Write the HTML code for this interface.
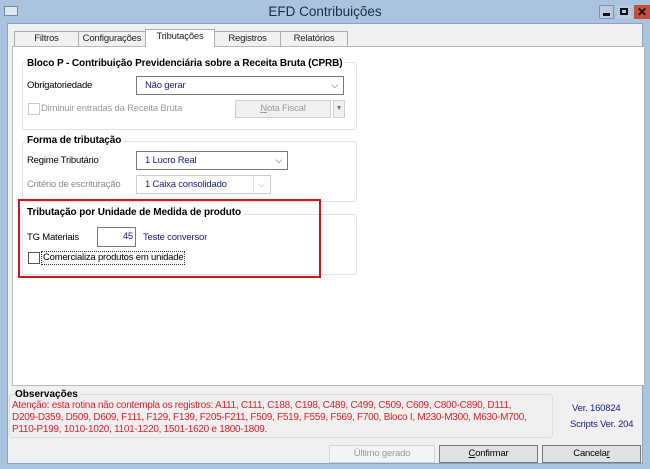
<!DOCTYPE html>
<html><head><meta charset="utf-8"><style>
*{box-sizing:border-box;margin:0;padding:0}
body{width:650px;height:469px;background:#aac3df;font-family:"Liberation Sans",sans-serif;font-size:9.5px;letter-spacing:-0.2px;color:#000;position:relative;overflow:hidden;white-space:nowrap}
.a{position:absolute}
.client{left:7px;top:23px;width:636px;height:441px;background:#f0f0f0;border:1px solid #8aa3c0}
.tab{top:31px;height:16px;background:#f0f0f0;border:1px solid #adadad;border-bottom:none;text-align:center;line-height:14px;font-size:9.5px;color:#222}
.panel{left:12px;top:46px;width:633px;height:340px;background:#fff;border:1px solid #b9b9b9}
.grp{border:1px solid #e2e2e2;border-radius:3px;background:#fff}
.gt{font-weight:bold;font-size:10px;letter-spacing:-0.1px;background:#fff;padding:0 2px}
.combo{background:#fff;border:1px solid #7a7a7a;color:#1a1a8c;padding-left:8px;line-height:17px}
.combo i{position:absolute;right:5px;top:0;font-style:normal;color:#333;font-size:9px}
.cb{width:12px;height:12px;border:1px solid #888;background:#fff}
.btn{border:1px solid #adadad;background:#e1e1e1;text-align:center;line-height:16px}
.red{color:#e0202a;font-size:10px;line-height:12px;letter-spacing:-0.28px}
</style></head><body>
<div class="a" style="left:4px;top:6px;width:14px;height:10px;background:#dfe8ef;border:1px solid #6f8aa3"></div>
<div class="a" style="left:0;top:4px;width:650px;text-align:center;font-size:13.5px;letter-spacing:0;color:#1e2e40">EFD Contribuições</div>
<div class="a" style="left:599px;top:5px;width:15px;height:14px;border:1px solid #7e94ad;background:#b8cbe0"><div class="a" style="left:3px;top:7px;width:7px;height:3px;background:#111"></div></div>
<div class="a" style="left:617px;top:5px;width:14px;height:14px;background:#b8cbe0"><div class="a" style="left:3px;top:3px;width:8px;height:7px;border:2px solid #111"></div></div>
<div class="a" style="left:634px;top:5px;width:16px;height:14px;background:#c7503c;color:#111;font-weight:bold;text-align:center;font-size:12px;line-height:14px">✕</div>
<div class="a client"></div>
<div class="a tab" style="left:14px;width:65px">Filtros</div>
<div class="a tab" style="left:78px;width:68px">Configurações</div>
<div class="a tab" style="left:214px;width:67px">Registros</div>
<div class="a tab" style="left:280px;width:68px">Relatórios</div>
<div class="a panel"></div>
<div class="a tab" style="left:145px;top:29px;height:18px;width:70px;background:#fff;border-color:#adadad;line-height:14px">Tributações</div>

<div class="a grp" style="left:22px;top:62px;width:335px;height:68px"></div>
<div class="a gt" style="left:25px;top:58px">Bloco P - Contribuição Previdenciária sobre a Receita Bruta (CPRB)</div>
<div class="a" style="left:27px;top:80px">Obrigatoriedade</div>
<div class="a combo" style="left:136px;top:76px;width:208px;height:19px">Não gerar<i>⌵</i></div>
<div class="a cb" style="left:28px;top:103px;border-color:#ccc"></div>
<div class="a" style="left:41px;top:103px;color:#9a9a9a">Diminuir entradas da Receita Bruta</div>
<div class="a btn" style="left:235px;top:100px;width:96px;height:18px;color:#9a9a9a;background:#f0f0f0;border-color:#d0d0d0"><u>N</u>ota Fiscal</div>
<div class="a btn" style="left:333px;top:100px;width:12px;height:18px;background:#f0f0f0;border-color:#d0d0d0;font-size:7px;color:#777">▼</div>

<div class="a grp" style="left:22px;top:141px;width:335px;height:61px"></div>
<div class="a gt" style="left:25px;top:135px">Forma de tributação</div>
<div class="a" style="left:27px;top:155px">Regime Tributário</div>
<div class="a combo" style="left:136px;top:151px;width:152px;height:19px">1 Lucro Real<i>⌵</i></div>
<div class="a" style="left:27px;top:179px;color:#8a8a8a">Critério de escrituração</div>
<div class="a combo" style="left:136px;top:175px;width:135px;height:19px;border-color:#ccc">1 Caixa consolidado<i style="color:#aaa;border-left:1px solid #ddd;padding-left:4px">⌵</i></div>

<div class="a grp" style="left:22px;top:214px;width:335px;height:61px"></div>
<div class="a gt" style="left:25px;top:207px">Tributação por Unidade de Medida de produto</div>
<div class="a" style="left:27px;top:232px">TG Materiais</div>
<div class="a" style="left:97px;top:227px;width:39px;height:20px;border:1px solid #7a7a7a;background:#fff;text-align:right;padding-right:2px;line-height:18px;color:#1a1a8c">45</div>
<div class="a" style="left:143px;top:232px;color:#1a1a8c">Teste conversor</div>
<div class="a cb" style="left:28px;top:252px;border-color:#555"></div>
<div class="a" style="left:41px;top:251px;border:1px dotted #333;padding:0 1px;line-height:12px">Comercializa produtos em unidade</div>
<div class="a" style="left:18px;top:199px;width:303px;height:79px;border:2px solid #d4161e"></div>

<div class="a grp" style="left:9px;top:394px;width:544px;height:44px;background:#f0f0f0;border-color:#ddd"></div>
<div class="a" style="left:15px;top:389px;font-weight:bold;font-size:10px;letter-spacing:0">Observações</div>
<div class="a red" style="left:12px;top:400px">Atenção: esta rotina não contempla os registros: A111, C111, C188, C198, C489, C499, C509, C609, C800-C890, D111,<br>D209-D359, D509, D609, F111, F129, F139, F205-F211, F509, F519, F559, F569, F700, Bloco I, M230-M300, M630-M700,<br>P110-P199, 1010-1020, 1101-1220, 1501-1620 e 1800-1809.</div>
<div class="a" style="left:572px;top:403px;color:#1a1a8c">Ver. 160824</div>
<div class="a" style="left:570px;top:419px;color:#1a1a8c">Scripts Ver. 204</div>
<div class="a btn" style="left:329px;top:445px;width:106px;height:18px;color:#999;background:#f4f4f4;border-color:#d5d5d5">Último gerado</div>
<div class="a btn" style="left:439px;top:445px;width:99px;height:18px;border-color:#7a7a7a"><u>C</u>onfirmar</div>
<div class="a btn" style="left:542px;top:445px;width:99px;height:18px;border-color:#7a7a7a">Cancela<u>r</u></div>
</body></html>
